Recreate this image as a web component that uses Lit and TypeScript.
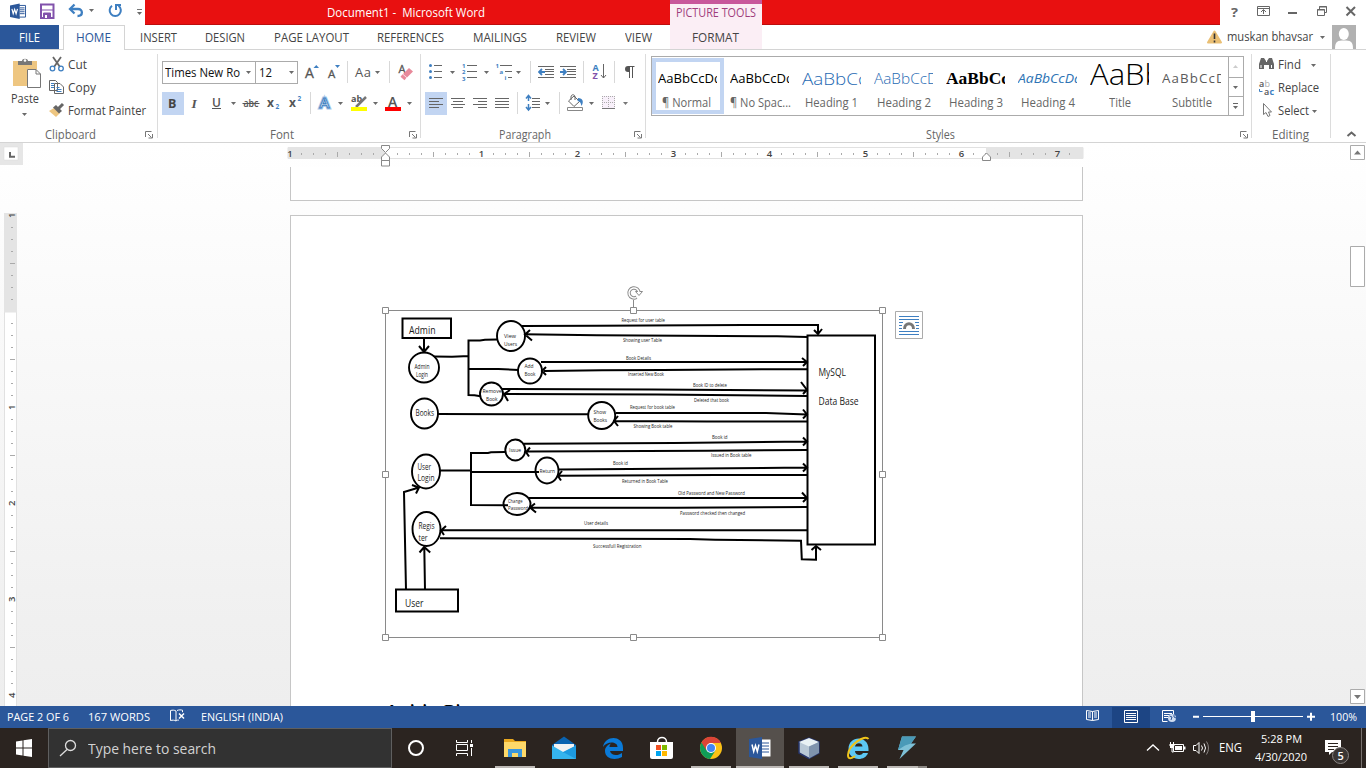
import { LitElement, html, svg, css, nothing } from "lit";
import { customElement, property } from "lit/decorators.js";

/* A single line of text, squeezed or stretched to an exact width. */
@customElement("fit-label")
class FitLabel extends LitElement {
  @property() text = "";
  @property({ type: Number }) w = 0;
  static styles = css`
    :host { display: block; white-space: pre; }
    span { display: inline-block; transform-origin: 0 50%; }
  `;
  render() {
    return html`<span>${this.text}</span>`;
  }
  updated() {
    const s = this.renderRoot.querySelector("span") as HTMLElement;
    s.style.transform = "none";
    const n = s.getBoundingClientRect().width;
    if (n > 0 && this.w) s.style.transform = `scaleX(${this.w / n})`;
  }
}

type Item = { x: number; w: number; t?: string; c?: string; g?: any };
const T = (x: number, w: number, t: string, c = ""): Item => ({ x, w, t, c });
const G = (x: number, w: number, g: any, c = ""): Item => ({ x, w, g, c });

/* A row of glyphs and labels; every gap follows from the item positions. */
function strip(x0: number, y: number, h: number, items: Item[], cls = "") {
  let end = x0;
  return html`<div class="strip ${cls}" style="height:${h}px">
    ${items.map((i) => {
      const m = i.x - end;
      end = i.x + i.w;
      return i.t !== undefined
        ? html`<div class="cell ${i.c}" style="margin-left:${m}px;width:${i.w}px;line-height:${h}px"><fit-label .text=${i.t} .w=${i.w}></fit-label></div>`
        : html`<svg class="cell ${i.c}" style="margin-left:${m}px" width=${i.w} height=${h} viewBox="${i.x} ${y} ${i.w} ${h}">${i.g}</svg>`;
    })}
  </div>`;
}

const caret = (x: number, y: number, c = "#6a6a6a") => svg`<path d="M${x} ${y}h5l-2.5 3z" fill=${c} />`;
const launcher = (x: number) => svg`<path d="M${x + 0.5} 137v-5.5h6M${x + 3} 134l3.500 3.500M${x + 7.500} 134v4h-4" fill="none" stroke="#777" />`;
const vline = (x: number, y: number, h: number) => svg`<path d="M${x + 0.5} ${y}v${h}" stroke="#d8d8d8" />`;
const lines = (x: number, ys: number[], ws: number[], offs: number[] = []) =>
  ys.map((y, i) => svg`<path d="M${x + (offs[i] || 0)} ${y + 0.5}h${ws[i]}" stroke="#666" />`);

const wordLogo = (x: number, y: number, s: number) => svg`<g transform="translate(${x} ${y}) scale(${s})">
  <path d="M8 2h8v12H8z" fill="#fff" stroke="#2b579a" /><path d="M10 4.500h5M10 6.500h5M10 8.500h5M10 10.500h5" stroke="#2b579a" />
  <path d="M0 2L10 0v16L0 14z" fill="#2b579a" /><path d="M2 5.500l1.300 5 1.500-4.500 1.500 4.500 1.400-5" fill="none" stroke="#fff" stroke-width="1.200" /></g>`;

const range = (n: number) => Array.from({ length: n }, (_, i) => i);

const ellipses = [
  [424, 367.5, 15, 15], [511, 336, 14, 15], [530, 371, 12, 12.5], [491.5, 394, 11.5, 11.5],
  [424.5, 413.5, 13.5, 15], [601.7, 415.5, 13.5, 13.5], [515.3, 450, 10, 10.5], [426, 471.5, 14, 17],
  [547, 470.500, 11.500, 13], [517, 504, 13.500, 11], [426.500, 529, 14, 17],
];
const diagramText: [number, number, number, number, string][] = [
  [409, 334, 26.5, 10.5, "Admin"], [414.5, 368.5, 15, 6.2, "Admin"], [416, 376.5, 12, 6.2, "Login"],
  [504, 338, 12, 6, "View"], [504, 346, 13, 6, "Users"], [524.500, 368, 9, 6, "Add"], [524.500, 376, 11, 6, "Book"],
  [482.500, 393, 19, 6, "Remove"], [486, 401, 11.500, 6, "Book"], [415.500, 416, 18.500, 8.300, "Books"],
  [593.500, 414, 12.500, 6, "Show"], [593.500, 422, 13.500, 6, "Books"], [509, 452, 12, 6, "Issue"],
  [417.500, 469.500, 13.500, 8.300, "User"], [417.500, 481, 17, 8.300, "Login"], [539.500, 472.500, 15.500, 6, "Return"],
  [508, 503, 14.500, 6, "Change"], [508, 510, 20, 6, "Password"], [418.500, 529, 16, 8.300, "Regis"], [418.500, 540.500, 9, 8.300, "ter"],
  [405, 607, 18.500, 10, "User"], [818.500, 375.500, 27.500, 10, "MySQL"], [818.500, 404.500, 40, 10, "Data Base"],
  [621.500, 321.900, 43.500, 5.3, "Request for user table"], [623, 341.900, 39, 5.3, "Showing user Table"],
  [626, 359.500, 25, 5.3, "Book Details"], [628, 376.200, 36, 5.3, "Inserted New Book"], [693, 386.500, 34, 5.3, "Book ID to delete"],
  [694, 402, 35, 5.3, "Deleted that book"], [630, 409, 45, 5.3, "Request for book table"],
  [633.500, 428.300, 39, 5.3, "Showing Book table"], [712, 438.500, 15.500, 5.3, "Book id"], [711, 457.100, 40.500, 5.3, "Issued in Book table"],
  [613, 465.100, 15, 5.3, "Book id"], [622, 482.700, 46, 5.3, "Returned in Book Table"],
  [678, 494.600, 67, 5.3, "Old Password and New Password"], [680, 514.500, 65, 5.3, "Password checked then changed"],
  [584, 525.200, 24, 5.3, "User details"], [593, 547.700, 48.500, 5.3, "Successfull Registration"],
];
const strokes = [
  "M424 338v12M419 346l5 6 5-6", "M434 356.500l18 .3 17-.8M497 339.500l-12 .2-5 .7h-11.500V395l6 .2 6 1.100M468.500 369l30 0 20 1",
  "M438 414l80 .300h70", "M440 470.500h31M505 452l-14 .2-3 .8h-17V505l37 .3M471 472h68",
  "M406 590l-2-98 15-4.500M412 485l7 2.500-3 6", "M425 590l-.700-42M419.500 552.500l4.700-5.500 6 5.500",
  "M522 326l75-.300 147-.700h74v8M814 330l4 4 4-5", "M807 337l-30-.700-180-1-73-1M530 330l-5 4.500 7 6",
  "M541 362h266M802 358l5 4-4 4", "M807 369.300h-45l-100 .7-60 .3-58 .7M546 367l-4 4 4 4",
  "M502 389l150 .500 155 1M801 382l6 8-4 4", "M807 396l-150-1.500-152-.500M510 390l-6 4 4 7",
  "M616 413h150l41 1.500M803 409.500l4 5-4 4", "M807 421.500h-100l-92-.5M618 416l-4 5 4 5",
  "M524 443.700l150-.700 133-1.500M803 437.500l4 4-4 4", "M807 450l-100 .800-180 .800M530 447.500l-4 4.500 3 4.500",
  "M559 469.500l140-1 108-1M803 463.500l4 4-4 4", "M807 475h-90l-158 .700M562 471l-4 5 3 4.500",
  "M529 498h278M802 492.500l5 5.500-4 4", "M807 507l-130 .700H530M535 503.500l-5 4 6 5",
  "M807 530.300H441M446 526l-5 4.500 3 4.500", "M440 538.300l250 .700 25 .700 86 1 .800 18.500 14.200.600V546M811.500 550l4.500-4 5 4",
];
const handles = [[385, 310], [633, 310], [882, 310], [385, 474], [882, 474], [385, 637], [633, 637], [882, 637]];

@customElement("app-root")
class AppRoot extends LitElement {
  static styles = css`
    :host { display: flex; flex-direction: column; width: 1366px; height: 768px; overflow: hidden; background: #fff;
      font: 12px "Open Sans", "Noto Sans", sans-serif; color: #444; }
    * { box-sizing: border-box; }
    svg { display: block; flex: none; }
    .strip { display: flex; flex: none; }
    .cell { flex: none; }
    .dn fit-label { padding-top: 1px; }
    .top { display: flex; height: 49px; flex: none; }
    .c1 { width: 670px; } .c2 { width: 92px; background: #fbeef5; } .c3 { width: 604px; }
    .bar { display: flex; height: 25px; }
    .red { background: #e81010; border-bottom: 1px solid #bd0d0d; color: #fff; height: 25px; }
    .red.l { width: 525px; } .red.r { width: 458px; }
    .pt { border-top: 4px solid #c8579b; height: 25px; color: #a03d7c; }
    .qm { font-size: 13px; font-weight: 700; color: #666; }
    .tabs { display: flex; height: 24px; }
    .file { width: 59px; background: #2b579a; color: #fff; }
    .home { width: 62px; margin-left: 4px; height: 25px; border: 1px solid #d4d4d4; border-bottom: 0; background: #fff; color: #2b579a; position: relative; }
    .ribbon { display: flex; height: 94px; flex: none; border-top: 1px solid #d4d4d4; border-bottom: 1px solid #d4d4d4; }
    .group { flex: none; height: 92px; display: flex; flex-direction: column; padding-top: 4px; position: relative;
      background: linear-gradient(#dcdcdc, #dcdcdc) right 4px / 1px 84px no-repeat; }
    .cap { color: #666; margin-top: auto; }
    .clip { width: 158px; } .font { width: 263px; } .para { width: 225px; } .sty { width: 606px; } .edit { width: 79px; }
    .row { display: flex; }
    .combos { display: flex; height: 23px; margin: 7px 0 0 4px; }
    .combo { border: 1px solid #ababab; height: 23px; color: #111; }
    .combo.a { width: 94px; } .combo.b { width: 43px; margin-left: -1px; }
    .gallery { display: flex; margin: 2px 0 0 5px; width: 593px; height: 60px; border: 1px solid #ababab; }
    .style { width: 72px; height: 56px; margin-top: 1px; padding: 5px 0 0 6px; }
    .style.on { border: 4px solid #c2d5f2; padding: 1px 0 0 2px; }
    .prev { width: 59px; height: 31px; overflow: hidden; color: #000; }
    .prev fit-label { line-height: 32px; }
    .nm { height: 18px; display: flex; color: #666; line-height: 18px; }
    .p1 { font-size: 12px; } .p2 { font-size: 17px; font-weight: 300; color: #1f6ab3; } .p3 { font-size: 14px; font-weight: 300; color: #1f6ab3; }
    .p4 { font: bold 16px "Liberation Serif", serif; } .p5 { font-size: 12px; font-style: italic; color: #2e74b5; }
    .p6 { font-size: 30px; font-weight: 300; } .p6 fit-label { line-height: 22px; }
    .p7 { font-size: 12px; color: #5a5a5a; letter-spacing: 1px; }
    .doc { display: flex; height: 563px; flex: none; background: linear-gradient(#fff, #f0f0f0 85%, #eee); overflow: hidden; }
    .canvas { width: 1060px; flex: none; display: flex; flex-direction: column; }
    .page { width: 793px; margin-left: 266px; background: #fff; border: 1px solid #c6c6c6; flex: none; }
    .page.a { height: 34px; border-top: 0; } .page.b { height: 560px; margin-top: 14px; padding: 69px 0 0 89px; }
    .pic { display: flex; }
    .opt { margin: 26px 0 0 5px; }
    .head { font: bold 16px/18px "Liberation Serif", serif; color: #000; margin: 57px 0 0 6px; }
    .sb { margin-left: auto; }
    .status { height: 22px; flex: none; background: #2b579a; color: #fff; font-size: 11.500px; }
    .task { height: 40px; flex: none; background: #2b2420; color: #fff; display: flex; }
    .search { width: 344px; border: 1px solid #5f5f5f; background: #323232; color: #d2d2d2; font-size: 14.500px; }
    .clock { width: 62px; font-size: 11.500px; display: flex; flex-direction: column; padding-top: 2px; }
    text { font-family: "Open Sans", "Noto Sans", sans-serif; }
  `;

  top() {
    return html`<div class="top">
      <div class="c1">
        <div class="bar">
          ${strip(0, 0, 25, [
            G(9, 18, wordLogo(10, 3.5, 0.97)),
            G(38, 18, svg`<path d="M41 4.500h12.500V18h-12.500z" fill="#fff" stroke="#8152ab" stroke-width="2"/><path d="M43.500 13h7v5h-7zM42 10h11" fill="#8152ab" stroke="#8152ab"/><path d="M45 15h2v3h-2z" fill="#fff"/>`),
            G(67, 20, svg`<path d="M71 9h7c5 0 5.500 7-.5 7" fill="none" stroke="#3e7fc1" stroke-width="2.300"/><path d="M74.500 4.500L70 9l4.500 4.500" fill="none" stroke="#3e7fc1" stroke-width="2.300"/>`),
            G(88, 8, caret(89, 9)),
            G(107, 18, svg`<path d="M112 5.800a5.600 5.600 0 1 0 6.500 0" fill="none" stroke="#3e7fc1" stroke-width="2"/><path d="M116 10V5h5" fill="none" stroke="#3e7fc1" stroke-width="2"/>`),
            G(136, 9, svg`<path d="M137 9.500h5" stroke="#777"/>${caret(137, 12)}`),
          ])}
          <div class="red l">${strip(145, 1, 24, [T(326.5, 158, "Document1 -  Microsoft Word")], "dn")}</div>
        </div>
        <div class="tabs">
          <div class="file">${strip(0, 25, 24, [T(19, 21, "FILE")], "dn")}</div>
          <div class="home">${strip(64, 26, 23, [T(76, 35, "HOME")])}</div>
          ${strip(125, 25, 24, [T(140, 37, "INSERT"), T(205, 40, "DESIGN"), T(274, 75, "PAGE LAYOUT"), T(377, 67, "REFERENCES"), T(473, 54, "MAILINGS"), T(556, 40, "REVIEW"), T(625, 27, "VIEW")], "dn")}
        </div>
      </div>
      <div class="c2"><div class="pt">${strip(670, 4, 18, [T(676, 80, "PICTURE TOOLS")])}</div>
        ${strip(670, 25, 24, [T(692, 47, "FORMAT")], "dn")}</div>
      <div class="c3">
        <div class="bar"><div class="red r"></div>
          ${strip(1220, 0, 24, [
            T(1231, 7, "?", "qm"),
            G(1256, 15, svg`<path d="M1257.500 6.500h12v9h-12zM1257 8.500h13M1263.500 14v-4M1261 12l2.500-2.500 2.500 2.500" fill="none" stroke="#666"/>`),
            G(1287, 12, svg`<path d="M1288 13h9" stroke="#666" stroke-width="2"/>`),
            G(1315, 14, svg`<path d="M1317.500 9.500h7v6h-7zM1319.500 9V6.500h7v6H1325M1317 10h8M1319 7h8" fill="none" stroke="#666"/>`),
            G(1345, 14, svg`<path d="M1346.500 7l8.500 8.500M1355 7l-8.500 8.500" stroke="#666" stroke-width="2"/>`),
          ])}
        </div>
        ${strip(762, 25, 24, [
          G(1206, 17, svg`<path d="M1214.500 31.500l6.500 11h-13z" fill="#eabf74" stroke="#eabf74" stroke-width="2" stroke-linejoin="round"/><path d="M1214.500 33.500v5.500M1214.500 40.500v2" stroke="#333" stroke-width="1.600"/>`),
          T(1227, 86, "muskan bhavsar"),
          G(1318, 9, caret(1320, 36)),
          G(1332, 24, svg`<path d="M1332 25h24v24h-24z" fill="#b1b1b1"/><ellipse cx="1343.800" cy="34" rx="5" ry="6" fill="#fff"/><path d="M1335 49c0-8 3-8.500 9-8.500s9 .5 9 8.500z" fill="#fff"/>`),
        ])}
      </div>
    </div>`;
  }

  clipboard() {
    return html`<div class="group clip"><div class="row">
      <div>
        ${strip(0, 54, 34, [G(9, 35, svg`<path d="M13 61h24v25H13z" fill="#eec681"/><path d="M18 65v-4h4c0-3 6-3 6 0h4v4z" fill="#777"/><circle cx="25" cy="60.500" r="1.300" fill="#fff"/><path d="M27 69h9l5 5v14H27z" fill="#fff"/><path d="M27.500 69.500h8.500l4.500 4.500v13.500h-13zM36 69.500v4.500h4.500" fill="none" stroke="#777"/>`)])}
        ${strip(0, 88, 22, [T(11, 28, "Paste")])}
        ${strip(0, 110, 8, [G(20, 9, caret(22, 113))])}
      </div>
      <div>
        ${strip(44, 54, 22, [G(49, 16, svg`<path d="M53 57l7 10M61 57l-7 10" stroke="#666" stroke-width="1.800"/><circle cx="52.500" cy="68.500" r="2.300" fill="none" stroke="#3e7fc1" stroke-width="1.300"/><circle cx="61" cy="68.500" r="2.300" fill="none" stroke="#3e7fc1" stroke-width="1.300"/>`), T(68, 19, "Cut")])}
        ${strip(44, 76, 24, [G(48, 17, svg`<path d="M49.500 80.500h6l2 2v8h-8zM54.500 83.500h5.500l3.500 3.500v6.500h-9z" fill="#fff" stroke="#666"/><path d="M51 83.500h3M51 85.500h3M51 87.500h3M56.500 87.500h3M56.500 89.500h5M56.500 91.500h5" stroke="#3e7fc1"/>`), T(68, 28, "Copy")])}
        ${strip(44, 100, 22, [G(48, 18, svg`<path d="M49 111l5-3 6 5-4 4z" fill="#eec681"/><path d="M53 107.500l3-2.500 6 6-3 2.500z" fill="#666"/><path d="M58.500 108.500l4.500-4.500" stroke="#666" stroke-width="3"/>`), T(68, 78, "Format Painter")])}
      </div></div>
      ${strip(0, 125, 17, [T(45, 51, "Clipboard"), G(145, 10, launcher(145))], "cap dn")}
    </div>`;
  }

  font() {
    return html`<div class="group font">
      <div class="row"><div class="combos">
        <div class="combo a">${strip(163, 62, 21, [T(165, 75, "Times New Ro"), G(244, 9, caret(246, 71))])}</div>
        <div class="combo b">${strip(256, 62, 21, [T(259, 13, "12"), G(286, 9, caret(289, 71))])}</div></div>
        ${strip(298, 54, 36, [
          G(304, 16, svg`<text x="305" y="78" font-size="14" fill="#555" stroke="#555" stroke-width=".3">A</text><path d="M313.500 68h5.500l-2.700-3z" fill="#3e7fc1"/>`),
          G(327, 14, svg`<text x="328" y="78" font-size="11.500" fill="#555" stroke="#555" stroke-width=".3">A</text><path d="M335 65h5l-2.500 3z" fill="#3e7fc1"/>`),
          G(347, 1, vline(347, 61, 22)), G(354, 28, svg`<text x="355" y="77" font-size="13" fill="#555" textLength="16">Aa</text>${caret(375, 71)}`),
          G(389, 1, vline(389, 61, 22)), G(397, 18, svg`<text x="398.500" y="73" font-size="11" fill="#555" stroke="#555" stroke-width=".3">A</text><path d="M403 74l6-6 4 3.500-6 6z" fill="#e8899a"/><path d="M401.500 75.500l4 3.500" stroke="#e8899a" stroke-width="3"/>`),
        ])}
      </div>
      ${strip(158, 90, 28, [
        G(162, 22, svg`<path d="M162 92h22v23h-22z" fill="#c2d5f2"/><text x="168" y="107.500" font-size="12.500" font-weight="bold" fill="#444">B</text>`),
        G(188, 16, svg`<text x="191.500" y="108" font-size="13.500" font-weight="bold" font-style="italic" style="font-family:'Liberation Serif'" fill="#555">I</text>`),
        G(210, 28, svg`<text x="212" y="107" font-size="12" font-weight="600" fill="#555">U</text><path d="M212 108.500h9" stroke="#555"/>${caret(231, 102)}`),
        G(242, 19, svg`<text x="243.500" y="107" font-size="10.500" textLength="15" lengthAdjust="spacingAndGlyphs" fill="#555" font-weight="600">abc</text><path d="M242.500 103.500h17" stroke="#555"/>`),
        G(265, 16, svg`<text x="267" y="107" font-size="12" font-weight="bold" fill="#555">x</text><text x="275.500" y="109" font-size="6.500" font-weight="bold" fill="#3e7fc1">2</text>`),
        G(287, 18, svg`<text x="289" y="107" font-size="12" font-weight="bold" fill="#555">x</text><text x="297.500" y="101" font-size="6.500" font-weight="bold" fill="#3e7fc1">2</text>`),
        G(310, 1, vline(310, 92, 22)),
        G(317, 28, svg`<text x="319.500" y="108" font-size="15" font-weight="600" fill="#fff" stroke="#a8c8ea" stroke-width="3">A</text><text x="319.500" y="108" font-size="15" font-weight="600" fill="#fff" stroke="#3e7fc1" stroke-width="1">A</text>${caret(338, 102)}`),
        G(349, 31, svg`<text x="351" y="102" font-size="9" font-weight="bold" fill="#555">ab</text><path d="M356 107l10-10" stroke="#777" stroke-width="2.500"/><path d="M351 107h16v4h-16z" fill="#ff0"/>${caret(373, 102)}`),
        G(384, 30, svg`<text x="388" y="107" font-size="14" font-weight="600" fill="#555">A</text><path d="M385 107h16v4h-16z" fill="#f00"/>${caret(407, 102)}`),
      ])}
      ${strip(158, 125, 17, [T(269.5, 24, "Font"), G(409, 10, launcher(409))], "cap dn")}
    </div>`;
  }

  paragraph() {
    const num = (x: number, y: number, t: string) => svg`<text x=${x} y=${y} font-size="6" font-weight="bold" fill="#3e7fc1">${t}</text>`;
    return html`<div class="group para">
      ${strip(421, 54, 36, [
        G(428, 28, svg`${[65.5, 71.500, 77.500].map((y) => svg`<circle cx="430.500" cy=${y} r="1.500" fill="#3e7fc1"/>`)}${lines(434, [65, 71, 77], [8, 8, 8])}${caret(450, 71)}`),
        G(461, 30, svg`${num(462, 67.5, "1")}${num(462, 74, "2")}${num(462, 80.5, "3")}${lines(467, [65, 71, 77], [10, 10, 10])}${caret(484, 71)}`),
        G(495, 28, svg`${num(495.5, 67.5, "1")}${num(499.5, 73.5, "a")}${num(504.5, 79.500, "i")}${lines(500, [65, 71, 77], [12, 7, 4], [0, 5, 8])}${caret(516, 71)}`),
        G(530, 1, vline(530, 61, 22)),
        G(538, 17, svg`${lines(538, [66, 69, 71, 74, 77], [16, 9, 9, 9, 16], [0, 7, 7, 7, 0])}<path d="M545 72h-6M542 69l-3 3 3 3" fill="none" stroke="#3e7fc1" stroke-width="1.800"/>`),
        G(560, 17, svg`${lines(560, [66, 69, 71, 74, 77], [16, 9, 9, 9, 16], [0, 7, 7, 7, 0])}<path d="M560 72h6M563 69l3 3-3 3" fill="none" stroke="#3e7fc1" stroke-width="1.800"/>`),
        G(583, 1, vline(583, 61, 22)),
        G(591, 17, svg`<text x="592.500" y="71" font-size="9" font-weight="bold" fill="#3e7fc1">A</text><text x="592.500" y="79" font-size="9" font-weight="bold" fill="#8152ab">Z</text><path d="M603.500 64v14M601 75l2.500 3 2.500-3" fill="none" stroke="#666"/>`),
        G(614, 1, vline(614, 61, 22)),
        G(624, 12, svg`<path d="M629.500 67v11M632.500 67v11M628 66.500h6.500" stroke="#555" fill="none"/><path d="M630 66h-2a2.800 2.800 0 0 0 0 6h2z" fill="#555"/>`),
      ])}
      ${strip(421, 90, 28, [
        G(425, 22, svg`<path d="M425 92h22v23h-22z" fill="#c2d5f2"/>${lines(429, [98, 101, 104, 107], [14, 10, 14, 10])}`),
        G(450, 17, svg`${lines(451, [98, 101, 104, 107], [14, 10, 14, 10], [0, 2, 0, 2])}`),
        G(472, 17, svg`${lines(473, [98, 101, 104, 107], [14, 9, 14, 9], [0, 5, 0, 5])}`),
        G(494, 17, svg`${lines(495, [98, 101, 104, 107], [14, 14, 14, 14])}`),
        G(517, 1, vline(517, 92, 22)),
        G(524, 28, svg`${lines(532, [98, 101, 104, 107], [8, 8, 8, 8])}<path d="M528.500 96v5M528.500 104v6M526 98.500l2.500-3 2.500 3M526 107l2.500 3 2.500-3" fill="none" stroke="#3e7fc1" stroke-width="1.500"/>${caret(545, 102)}`),
        G(559, 1, vline(559, 92, 22)),
        G(566, 30, svg`<path d="M568.500 101l5.500-5 5.500 5.500-5.500 5zM571 100v-3c0-3 4-3 4 0v3" fill="none" stroke="#666"/><path d="M578 98c5 0 6 4 3.500 8-1-4-1-4-4-5z" fill="#3e7fc1"/><path d="M567.500 107.500h15v3h-15z" fill="#fff" stroke="#888"/>${caret(589, 102)}`),
        G(600, 30, svg`<path d="M602 96h13v12h-13z" fill="#f8f0fa"/><path d="M602.500 96v12M608.500 96v12M614.500 96v12M602 96.500h13M602 102.500h13" stroke="#aaa" stroke-dasharray="1 1"/><path d="M602 108.500h13" stroke="#777"/>${caret(623, 102, "#777")}`),
      ])}
      ${strip(421, 125, 17, [T(498.5, 52, "Paragraph"), G(634, 10, launcher(634))], "cap dn")}
    </div>`;
  }

  styleGallery() {
    const s: [string, string, number, string, number, number][] = [
      ["p1", "AaBbCcDd", 64, "¶ Normal", 4, 49], ["p1", "AaBbCcDd", 64, "¶ No Spac...", 0, 61],
      ["p2", "AaBbCc", 65, "Heading 1", 3, 53], ["p3", "AaBbCcDd", 73, "Heading 2", 3, 54],
      ["p4", "AaBbCc", 63, "Heading 3", 3, 54], ["p5", "AaBbCcDd", 64, "Heading 4", 3, 54],
      ["p6", "AaBb", 73, "Title", 19, 22], ["p7", "AaBbCcDd", 74, "Subtitle", 10, 40],
    ];
    return html`<div class="group sty">
      <div class="gallery">
        ${s.map(([c, p, pw, n, off, nw], i) => html`<div class="style ${i ? "" : "on"}">
          <div class="prev ${c}"><fit-label .text=${p} .w=${pw}></fit-label></div>
          <div class="nm" style="padding-left:${off}px"><fit-label .text=${n} .w=${nw}></fit-label></div></div>`)}
        <svg width="15" height="58" viewBox="1229 57 15 58"><path d="M1229.500 57v58M1229 77.500h15M1229 96.500h15" stroke="#ababab"/><path d="M1234 68h5l-2.500-3z" fill="#ccc"/>${caret(1234, 86)}<path d="M1234 103.500h5" stroke="#666"/>${caret(1234, 106)}</svg>
      </div>
      ${strip(646, 125, 17, [T(926, 29, "Styles"), G(1240, 10, launcher(1240))], "cap dn")}
    </div>`;
  }

  editing() {
    return html`<div class="group edit">
      ${strip(1252, 54, 22, [G(1258, 17, svg`<path d="M1259 69v-5l2-6h3l2 3h1l2-3h3l2 6v5h-5v-4h-5v4z" fill="#666"/><path d="M1261 65v3M1271.500 65v3M1266.500 59v3" stroke="#fff"/>`), T(1278, 23, "Find"), G(1309, 9, caret(1311, 64))])}
      ${strip(1252, 76, 24, [G(1258, 18, svg`<text x="1259" y="87" font-size="9" font-weight="600" fill="#555">a</text><text x="1264.500" y="87" font-size="9" fill="#aaa">b</text><text x="1264" y="94.500" font-size="9" font-weight="600" fill="#555">a</text><text x="1269.500" y="94.500" font-size="9" font-weight="bold" fill="#3e7fc1">c</text><path d="M1259.500 89v2.500h3" fill="none" stroke="#3e7fc1"/>`), T(1278, 41, "Replace")])}
      ${strip(1252, 100, 22, [G(1260, 14, svg`<path d="M1263.500 103.500v11l2.500-2 2 4 2-1-1.500-3.500h3z" fill="#fff" stroke="#777"/>`), T(1278, 31, "Select"), G(1310, 9, caret(1312, 110))])}
      ${strip(1252, 125, 17, [T(1272, 37, "Editing")], "cap dn")}
    </div>
    <div class="strip cap">${strip(1331, 125, 17, [G(1345, 12, svg`<path d="M1347.500 136l4-3.500 4 3.500" fill="none" stroke="#666" stroke-width="2"/>`)])}</div>`;
  }

  vruler() {
    return html`<svg width="24" height="563" viewBox="0 143 24 563">
      <path d="M0 143h23v22H0z" fill="#e6e6e6"/><path d="M4 147h14v13H4z" fill="#fff" stroke="#d9d9d9" stroke-width=".5"/><path d="M10 152v4.800h5" fill="none" stroke="#666" stroke-width="2"/>
      <path d="M4.500 213.500h12V710h-12z" fill="#fff" stroke="#e1e1e1"/><path d="M4 213h13v99.500H4z" fill="#e4e4e4"/>
      ${range(41).map((i) => { const y = 216 + i * 12; return i % 8 === 0 ? nothing : i % 8 === 4 ? svg`<path d="M10 ${y - 0.5}h5" stroke="#aaa"/>` : svg`<path d="M11 ${y - 0.5}h2" stroke="#aaa"/>`; })}
      ${([[215.5, "1"], [407.5, "1"], [503.500, "2"], [599.500, "3"], [695.500, "4"]] as [number, string][]).map(([y, t]) => svg`<text transform="translate(15 ${y + 2.500}) rotate(-90)" font-size="9.500" font-weight="600" fill="#444">${t}</text>`)}
    </svg>`;
  }

  hruler() {
    return html`<svg width="1060" height="24" viewBox="24 143 1060 24">
      <path d="M288 147.500h795v11H288z" fill="#fff" stroke="#e1e1e1"/><path d="M288 147h97v12h-97zM986 147h97v12h-97z" fill="#e4e4e4"/>
      ${range(66).map((i) => { const x = 289 + i * 12; return i % 8 === 0 ? nothing : i % 8 === 4 ? svg`<path d="M${x + 0.5} 152v5" stroke="#aaa"/>` : svg`<path d="M${x + 0.5} 153v2" stroke="#aaa"/>`; })}
      ${([[290, "1"], [481.5, "1"], [577.5, "2"], [673.5, "3"], [769.5, "4"], [865.5, "5"], [961.5, "6"], [1057.5, "7"]] as [number, string][]).map(([x, t]) => svg`<text x=${x} y="157" text-anchor="middle" font-size="9.500" font-weight="600" fill="#444">${t}</text>`)}
      <path d="M381.500 145.500h8v3l-4 4-4-4zM381.500 160.500v-3.500l4-4 4 4v3.500zM381.500 160.500h8v5.500h-8z" fill="#fff" stroke="#888"/>
      <path d="M982.500 160.500v-3.500l4-4 4 4v3.500z" fill="#fff" stroke="#888"/>
    </svg>`;
  }

  picture() {
    return html`<svg width="510" height="360" viewBox="380 285 510 360">
      <g fill="none" stroke="#000" stroke-width="2">
        <path d="M402.500 318.500h48.500v19.500h-48.500zM396 589.500h62v22h-62zM807.500 335.500h67.500v209h-67.500z"/>
        ${ellipses.map(([x, y, a, b]) => svg`<ellipse cx=${x} cy=${y} rx=${a} ry=${b} stroke-width="1.900"/>`)}
        ${strokes.map((d) => svg`<path d=${d} stroke-width="2"/>`)}
      </g>
      ${diagramText.map(([x, y, w, s, t]) => svg`<text x=${x} y=${y} font-size=${s} textLength=${w} lengthAdjust="spacingAndGlyphs" fill="#1a1a1a">${t}</text>`)}
      <g fill="none" stroke="#8a8a8a"><path d="M385.500 310.500h497v327h-497zM633.500 300v8"/>
        <path d="M639 293a5 5 0 1 0-2.500 4.300" stroke-width="3.400"/><path d="M635.500 291.500h7l-3.500 4z" fill="#fff"/><path d="M639 293a5 5 0 1 0-2.500 4.300" stroke="#fff" stroke-width="1.500"/></g>
      ${handles.map(([x, y]) => svg`<path d="M${x - 2.5} ${y - 2.5}h6v6h-6z" fill="#fff" stroke="#8a8a8a"/>`)}
    </svg>`;
  }

  document() {
    return html`<div class="doc">
      ${this.vruler()}
      <div class="canvas">
        ${this.hruler()}
        <div class="page a"></div>
        <div class="page b">
          <div class="pic">${this.picture()}
            <svg class="opt" width="28" height="28" viewBox="895 311 28 28"><path d="M895.500 311.500h27v27h-27z" fill="#fff" stroke="#ababab"/><path d="M899 316.500h20M899 319.500h20M899 322.500h4M915 322.500h4M899 325.500h3M916 325.500h3M899 328.500h3M916 328.500h3M899 331.500h20M899 334.500h20" stroke="#3e7fc1"/><path d="M904.500 329c0-7 9-7 9 0" fill="none" stroke="#777" stroke-width="3"/></svg>
          </div>
          <div class="head">Activity Diagram</div>
        </div>
      </div>
      <svg class="sb" width="17" height="563" viewBox="1349 143 17 563"><path d="M1350.500 145.500h14v14h-14zM1350.500 246.500h14v40h-14zM1350.500 689.500h14v14h-14z" fill="#fff" stroke="#ababab"/><path d="M1354 154.500h7l-3.500-4zM1354 695h7l-3.500 4z" fill="#777"/></svg>
    </div>`;
  }

  status() {
    return html`<div class="status">${strip(0, 706, 22, [
      T(7, 62, "PAGE 2 OF 6"), T(88, 62, "167 WORDS"),
      G(169, 16, svg`<path d="M176 721v-10c-1.500-1-3.500-1-5.500-.5v10c2-.5 4-.5 5.500.5zc1-1 2-1 3-.8M177 710.500c2-.8 4-.7 5.500-.3v2" fill="none" stroke="#fff"/><path d="M179 713.500l5 5M184 713.500l-5 5" stroke="#fff" stroke-width="1.500"/>`),
      T(201, 82, "ENGLISH (INDIA)"),
      G(1085, 15, svg`<path d="M1092.500 711.500v9l-6-1v-9zl6-1v9l-6 1M1088 713h3M1088 715h3M1088 717h3M1094 713h3M1094 715h3M1094 717h3" fill="none" stroke="#fff"/>`),
      G(1112, 38, svg`<path d="M1112 707h38v21h-38z" fill="#1d4584"/><path d="M1124.500 710.500h13v12h-13zM1126 713.500h10M1126 715.500h10M1126 717.500h10M1126 719.500h10" fill="none" stroke="#fff"/>`),
      G(1161, 16, svg`<path d="M1173.500 714v-3.500h-11v11h5M1164 713.500h8M1164 715.500h5M1164 717.500h4" fill="none" stroke="#fff"/><circle cx="1172" cy="718" r="4" fill="#cfdcf0"/><path d="M1169.500 716l2.500 1-1 3M1174 715v2l2 1" stroke="#2b579a" fill="none"/>`),
      G(1192, 126, svg`<path d="M1193 716.700h6M1307 716.700h8M1311 712.700v8" stroke="#fff" stroke-width="2"/><path d="M1203 716.500h100" stroke="#fff"/><path d="M1251 711h4v11h-4z" fill="#fff"/>`),
      T(1330, 27, "100%"),
    ])}</div>`;
  }

  taskbar() {
    const run = (x: number, w = 40) => svg`<path d="M${x} 766h${w}v2h-${w}z" fill="#bdb9b6"/>`;
    return html`<div class="task">
      ${strip(0, 728, 40, [G(15, 18, svg`<path d="M16 741.500l6.500-1v7H16zM23.500 740.300L32 739v8.500h-8.500zM16 748.500h6.500v7l-6.500-1zM23.500 748.500H32v8.500l-8.500-1.300z" fill="#fff"/>`), G(33, 15, nothing)])}
      <div class="search">${strip(49, 729, 38, [G(58, 20, svg`<circle cx="70.500" cy="745.500" r="5" fill="none" stroke="#ddd" stroke-width="1.300"/><path d="M67 749.500l-7 6.500" stroke="#ddd" stroke-width="1.300"/>`), T(88, 128, "Type here to search")], "dn")}</div>
      ${strip(392, 728, 40, [
        G(406, 20, svg`<circle cx="416" cy="748" r="7" fill="none" stroke="#fff" stroke-width="2"/>`),
        G(454, 20, svg`<path d="M456.500 740v2.500h11V740M456.500 756v-2.500h11v2.500M456.500 744.500h11v6h-11zM471.500 740v3M471.500 748v8" fill="none" stroke="#fff"/><path d="M470 744h3v3h-3z" fill="#fff"/>`),
        G(495, 40, svg`<path d="M504 739h9l2 2h11v16h-22z" fill="#e9a81f"/><path d="M504 742h22v15h-22z" fill="#fdd869"/><path d="M508 757v-8h14v8h-4v-4h-6v4z" fill="#3a96dd"/>${run(495)}`),
        G(551, 26, svg`<path d="M552 745l12-8.500 12 8.500v12h-24z" fill="#0a63b0"/><path d="M554 744h20v8h-20z" fill="#f2f2f2"/><path d="M552 745.500l12 7 12-7V759h-24z" fill="#35b4ee"/><path d="M563 752l13-6.500V759z" fill="#1d9ae0"/>`),
        G(600, 26, svg`<path d="M603 747c2-12 20-12 20 1v3h-13c1 5 8 5 12 2v4c-7 4-17 2-17-6 0-4 3-6.500 6-7.500-1 1-1.500 2-1.500 3.500h8c0-6-11-6-14.500 0z" fill="#0a7ad8"/>`),
        G(648, 28, svg`<path d="M650 742h23v15q0 2-2 2h-19q-2 0-2-2z" fill="#fff"/><path d="M657.500 742c0-6 9-6 9 0" fill="none" stroke="#fff" stroke-width="1.500"/><path d="M656 745h5v5h-5z" fill="#f25022"/><path d="M662 745h5v5h-5z" fill="#7fba00"/><path d="M656 751h5v5h-5z" fill="#00a4ef"/><path d="M662 751h5v5h-5z" fill="#ffb900"/>`),
        G(691, 40, svg`<circle cx="711" cy="748" r="11" fill="#fbc116"/><path d="M711 748l-9.500-5.500a11 11 0 0 0 8.500 16.500l5.500-8.500z" fill="#0f9d58"/><path d="M701.500 742.500a11 11 0 0 1 19.500 .5H711l-4.500 7.500z" fill="#db4437"/><circle cx="711" cy="748" r="5" fill="#fff"/><circle cx="711" cy="748" r="4" fill="#4285f4"/>${run(691)}`),
        G(736, 48, svg`<path d="M736 728h48v40h-48z" fill="#55504c"/>${run(736, 48)}<path d="M760 739.500h10.500v17H760z" fill="#fff"/><path d="M762 743h7M762 746h7M762 749h7M762 752h7" stroke="#2b579a"/><path d="M749 739l13-2v22l-13-2z" fill="#2b579a"/><path d="M752 744.500l1.700 7 1.800-6 1.800 6 1.700-7" fill="none" stroke="#fff" stroke-width="1.500"/>`),
        G(789, 40, svg`<path d="M799 742l10-4 10 4v11l-10 5.500-10-5.500z" fill="#b9c8d6" stroke="#26346b" stroke-width="1.500"/><path d="M799 742l10-4 10 4-10 4.500z" fill="#e9f1f4"/><path d="M809 746.500l10-4.500v11l-10 5.500z" fill="#7f93ad"/>${run(789)}`),
        G(838, 40, svg`<path d="M848.500 749c0-14 20-14 20 0v2H855c0 4.500 6.500 5 8 2h5c-3 9-19.500 8-19.500-4zM855 746.500h7.500c0-4.500-7-4.500-7.500 0z" fill="#5cc8f5" fill-rule="evenodd"/><path d="M868.500 739c-3.500-5-20 6-20.500 16 0 5 4 3.500 7 1" fill="none" stroke="#f0c419" stroke-width="2"/>${run(838)}`),
        G(887, 40, svg`<path d="M902 736.500h14l-5 7h5L899.500 759l4-9H898z" fill="#7ec0d6"/><path d="M902 736.500h14l-5 7-6 2-7 4.500z" fill="#4a9ab8"/><path d="M887 766h31v2h-31z" fill="#bdb9b6"/><path d="M918 766h9v2h-9z" fill="#8b8783"/>`),
        G(1145, 16, svg`<path d="M1147 750.500l6-5.500 6 5.500" fill="none" stroke="#fff" stroke-width="1.300"/>`),
        G(1168, 18, svg`<path d="M1173.500 744.500h10v7h-10zM1170.500 742v3M1173.500 742v3M1169 745h6M1172 748v4h1.500" fill="none" stroke="#fff"/><path d="M1175 746h7v4h-7zM1170 744h4v4h-4zM1184 746.500h1.500v3h-1.500z" fill="#fff"/>`),
        G(1192, 18, svg`<path d="M1193.500 745.500h2.500l3-3v11l-3-3h-2.500z" fill="none" stroke="#fff"/><path d="M1201.500 745.500q2 2.500 0 5M1204 743.500q3 4.500 0 9" fill="none" stroke="#fff"/><path d="M1206.500 741.500q4 6.500 0 13" fill="none" stroke="#8a8583"/>`),
        T(1219, 23, "ENG"), G(1242, 10, nothing),
      ])}
      <div class="clock">${strip(1252, 730, 18, [T(1260.5, 41, "5:28 PM")])}${strip(1252, 748, 18, [T(1255, 52, "4/30/2020")])}</div>
      ${strip(1314, 728, 40, [
        G(1324, 26, svg`<path d="M1325 740h16v12h-9l-3 3v-3h-4z" fill="#fff"/><path d="M1328 743.500h10M1328 746.500h10M1328 749.500h6" stroke="#2b2420"/><circle cx="1340.500" cy="755.500" r="8" fill="#3a3634" stroke="#8a8583"/><text x="1337.500" y="759.500" font-size="11" font-weight="600" fill="#fff">5</text>`),
        G(1360, 4, svg`<path d="M1361.500 728v40" stroke="#77716e"/>`),
      ])}
    </div>`;
  }

  render() {
    return html`${this.top()}
      <div class="ribbon">${this.clipboard()}${this.font()}${this.paragraph()}${this.styleGallery()}${this.editing()}</div>
      ${this.document()}${this.status()}${this.taskbar()}`;
  }
}
